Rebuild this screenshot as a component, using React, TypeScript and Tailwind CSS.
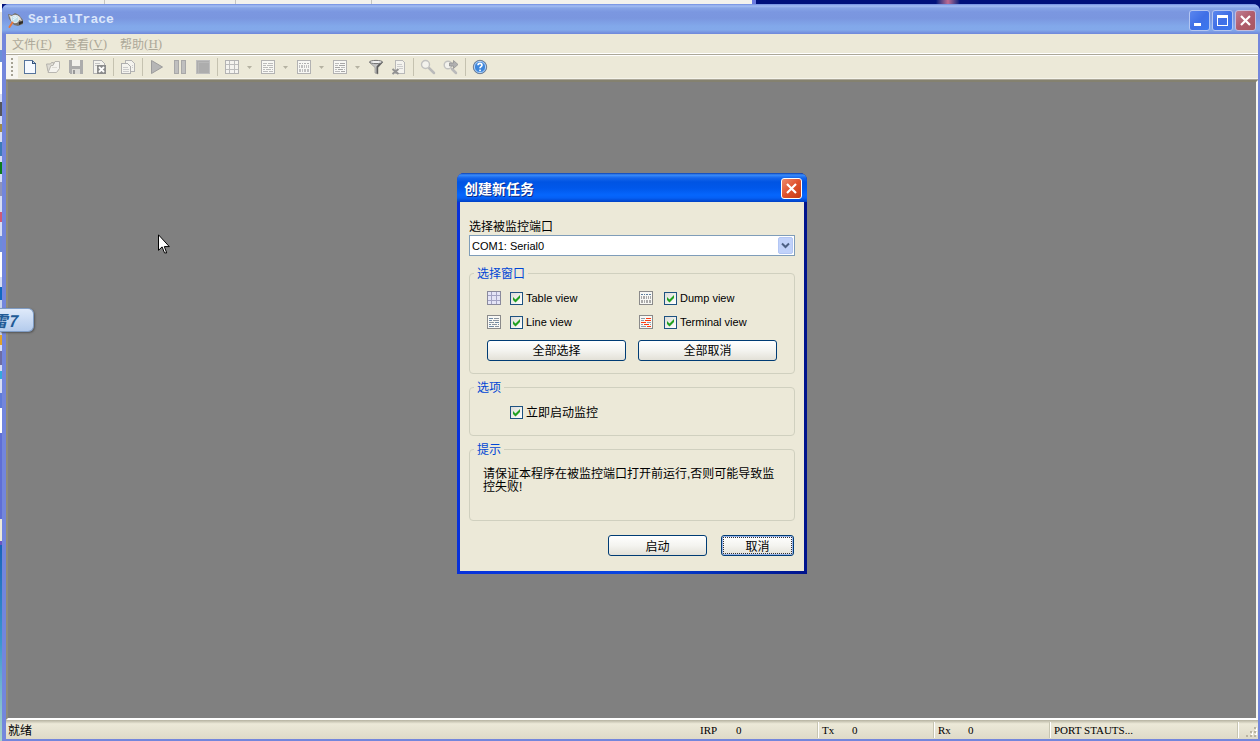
import { Fragment, useState } from "react";
import type { ReactNode } from "react";

type IconProps = { children: ReactNode; size?: string };

function Icon({ children, size = "size-4" }: IconProps) {
  return (
    <svg viewBox="0 0 16 16" className={`${size} shrink-0`} shapeRendering="crispEdges" aria-hidden="true">
      {children}
    </svg>
  );
}

function GridGlyph({ frame, line, fill }: { frame: string; line: string; fill: string }) {
  return (
    <>
      <rect x="1.5" y="1.5" width="13" height="13" fill={fill} stroke={frame} />
      <path d="M5.5 2v12M10.5 2v12M2 5.5h12M2 10.5h12" stroke={line} fill="none" />
    </>
  );
}

function LinesGlyph({ frame, line, alt }: { frame: string; line: string; alt?: string }) {
  return (
    <>
      <rect x="1.5" y="1.5" width="13" height="13" fill="#f8f8f4" stroke={frame} />
      <path d="M3 4.5h4M3 6.5h3M9 8.5h4M3 10.5h2M12 10.5h1M3 12.5h5" stroke={line} fill="none" />
      <path d="M8 4.5h5M7 6.5h6M3 8.5h5M6 10.5h5M9 12.5h4" stroke={alt ?? line} fill="none" />
    </>
  );
}

function DumpGlyph({ frame, line, dark }: { frame: string; line: string; dark: string }) {
  return (
    <>
      <rect x="1.5" y="1.5" width="13" height="13" fill="#f8f8f4" stroke={frame} />
      <path d="M3 4.5h2M6 4.5h1M8 4.5h2M11 4.5h2" stroke={dark} fill="none" />
      <path
        d="M3 6h1v3h-1zM5 6h2v3h-2zM8 6h1v3h-1zM10 6h1v3h-1zM12 6h1v3h-1zM3 10h2v3h-2zM6 10h1v3h-1zM8 10h2v3h-2zM11 10h2v3h-2z"
        fill={line}
      />
    </>
  );
}

const icons = {
  create: (
    <Icon>
      <path d="M2.5 1.5h8l3 3v10h-11z" fill="#f6faff" stroke="#56749c" />
      <path d="M10.5 2v2.500h3" fill="#c9dcf3" stroke="#34537c" />
    </Icon>
  ),
  open: (
    <Icon>
      <g shapeRendering="auto">
        <path d="M1.500 5h4l1-1.500h2v2l-3 7H3z" fill="#dedcd4" stroke="#b4b2ac" />
        <path d="M3 13.500l3-7h2l2-4h4.500v7l-3 4z" fill="#f4f3ee" stroke="#b8b6b0" />
        <path d="M7 8.500h5" stroke="#dddbd4" />
      </g>
    </Icon>
  ),
  save: (
    <Icon>
      <path d="M1 1h3v6h8V1h3v14H2l-1-1z" fill="#acacac" />
      <path d="M4 1h8v6H4z" fill="#f2f1ec" />
      <path d="M4 10h8v5H4z" fill="#dddcd7" />
      <path d="M5 11h2v4H5z" fill="#989898" />
    </Icon>
  ),
  close: (
    <Icon>
      <path d="M2.500 1.500h8l3 3v10h-11z" fill="#f4f3ee" stroke="#b2b2b2" />
      <path d="M4 4.500h5M4 6.500h2" stroke="#c4c4c4" />
      <rect x="6" y="6" width="9" height="9" fill="#8c8c8c" />
      <path d="M8 8l5 5M13 8l-5 5" stroke="#fff" strokeWidth="1.800" shapeRendering="auto" />
    </Icon>
  ),
  copy: (
    <Icon>
      <path d="M5.500 1.500h6l3 3v8h-9z" fill="#f4f3ee" stroke="#b4b4b4" />
      <path d="M1.500 4.500h6l3 3v7h-9z" fill="#f4f3ee" stroke="#aeaeae" />
      <path d="M3 8.500h5M3 10.500h6M3 12.500h6M12 6.500h1M12 8.500h1" stroke="#cbcbcb" />
    </Icon>
  ),
  play: (
    <Icon>
      <path d="M2.500 1.500v13l11-6.500z" fill="#b6b6b6" stroke="#9c9c9c" shapeRendering="auto" />
    </Icon>
  ),
  pause: (
    <Icon>
      <path d="M2.500 1.500h4v13h-4zM9.500 1.500h4v13h-4z" fill="#bfbfbf" stroke="#a8a8a8" />
    </Icon>
  ),
  stop: (
    <Icon>
      <rect x="1.500" y="1.500" width="13" height="13" fill="#adadad" stroke="#bebebe" />
      <path d="M3 14V3h11" stroke="#b8b8b8" fill="none" />
    </Icon>
  ),
  table: (
    <Icon>
      <GridGlyph frame="#b2b2b2" line="#bcbcbc" fill="#f4f3ef" />
    </Icon>
  ),
  lines: (
    <Icon>
      <LinesGlyph frame="#b2b2b2" line="#bbbbbb" />
    </Icon>
  ),
  dump: (
    <Icon>
      <DumpGlyph frame="#b2b2b2" line="#c0c0c0" dark="#b0b0b0" />
    </Icon>
  ),
  terminal: (
    <Icon>
      <LinesGlyph frame="#b2b2b2" line="#bbbbbb" alt="#a6a6a6" />
    </Icon>
  ),
  filter: (
    <Icon>
      <g shapeRendering="auto">
        <path d="M1 3l6 5.500V14l3 1V8.500L15 3z" fill="#c4c4c4" stroke="#777" strokeWidth=".5" />
        <path d="M10 8.500L15 3h-2.500L8.500 7.500V14l1.500 1z" fill="#5c5c5c" />
        <ellipse cx="8" cy="3" rx="6.500" ry="1.600" fill="#f0f0f0" stroke="#666" strokeWidth=".9" />
      </g>
    </Icon>
  ),
  clear: (
    <Icon>
      <path d="M4.500 1.500h7l2 2v11h-9z" fill="#f4f3ee" stroke="#b8b8b8" />
      <path d="M6 5.500h5M6 7.500h6M8 9.500h4" stroke="#cccccc" />
      <path d="M1.500 10l6 5M7.500 10l-6 5" stroke="#929292" strokeWidth="2" shapeRendering="auto" />
    </Icon>
  ),
  find: (
    <Icon>
      <g shapeRendering="auto">
        <path d="M9 9l5 5" stroke="#bababa" strokeWidth="2.500" strokeLinecap="round" />
        <circle cx="5.500" cy="5.500" r="4" fill="#f3f2ed" stroke="#c2c2c0" strokeWidth="1.400" />
      </g>
    </Icon>
  ),
  findNext: (
    <Icon>
      <g shapeRendering="auto">
        <path d="M9 10l4 4" stroke="#bababa" strokeWidth="2.500" strokeLinecap="round" />
        <circle cx="5" cy="6" r="3.800" fill="#f3f2ed" stroke="#c2c2c0" strokeWidth="1.400" />
        <path d="M6.500 4h4V1.500L15 5.500l-4.500 4V7h-4z" fill="#b0b0b0" stroke="#929292" strokeWidth=".8" />
      </g>
    </Icon>
  ),
  help: (
    <Icon>
      <g shapeRendering="auto">
        <circle cx="8" cy="8" r="6.700" fill="#3c86dc" stroke="#737f92" />
        <circle cx="8" cy="8" r="5.600" fill="none" stroke="#b8d4f4" />
        <path d="M6 6.300c0-2.600 4-2.600 4 0 0 1.400-2 1.500-2 3" stroke="#fff" strokeWidth="1.600" fill="none" />
        <rect x="7.200" y="10.600" width="1.700" height="1.600" fill="#fff" />
      </g>
    </Icon>
  ),
};

type Tool = { label: string; icon?: ReactNode; menu?: boolean };

const toolGroups: Tool[][] = [
  [
    { label: "新建", icon: icons.create },
    { label: "打开", icon: icons.open },
    { label: "保存", icon: icons.save },
    { label: "关闭", icon: icons.close },
  ],
  [{ label: "复制", icon: icons.copy }],
  [
    { label: "启动", icon: icons.play },
    { label: "暂停", icon: icons.pause },
    { label: "停止", icon: icons.stop },
  ],
  [
    { label: "Table view", icon: icons.table, menu: true },
    { label: "Line view", icon: icons.lines, menu: true },
    { label: "Dump view", icon: icons.dump, menu: true },
    { label: "Terminal view", icon: icons.terminal, menu: true },
    { label: "过滤", icon: icons.filter },
    { label: "清除", icon: icons.clear },
  ],
  [
    { label: "查找", icon: icons.find },
    { label: "查找下一个", icon: icons.findNext },
  ],
  [{ label: "帮助", icon: icons.help }],
];

function AppLogo() {
  return (
    <svg viewBox="0 0 16 16" className="size-4 shrink-0" aria-hidden="true">
      <path d="M0 2l4 1 3-2 4 2 4 5v4l-5 2-4-1-5-6z" fill="#77736c" />
      <path d="M1 3l3 1 2 3-3 1zM9 3l3 2 2 4-3-1z" fill="#e3dfd5" />
      <path d="M11 10l4-1v2l-4 2z" fill="#2f2d2a" />
      <circle cx="7" cy="7" r="3.800" fill="#bfe0ea" stroke="#e9eef2" />
      <path d="M5 6l3-2M5 8l4-3" stroke="#fff" strokeWidth=".8" />
      <path d="M4.500 10.500L1.500 15" stroke="#e8763a" strokeWidth="2" strokeLinecap="round" />
    </svg>
  );
}

function CaptionButton({ label, tone, children }: { label: string; tone: string; children: ReactNode }) {
  return (
    <button type="button" aria-label={label} className={`grid size-[21px] shrink-0 place-items-center rounded-[3px] border ${tone}`}>
      <svg viewBox="0 0 19 19" className="size-[19px]" shapeRendering="crispEdges" aria-hidden="true">
        {children}
      </svg>
    </button>
  );
}

const blueTone = "border-[#b4c6f2] bg-linear-to-br from-[#5b86ee] via-[#3f6fe6] to-[#3a78f0]";
const mutedRedTone = "border-[#c3bddf] bg-linear-to-br from-[#bf7d92] via-[#b05c6c] to-[#a8575f]";
const redTone = "border-white bg-linear-to-br from-[#ec8a6c] via-[#e0512c] to-[#c43a12]";

function Cross() {
  return <path d="M5 5l9 9M14 5l-9 9" stroke="#fff" strokeWidth="2.200" shapeRendering="auto" />;
}

function MenuItem({ text, hotkey }: { text: string; hotkey: string }) {
  return (
    <button type="button" className="flex items-center leading-4">
      {text}
      <span className="font-['Liberation_Serif',serif] text-[13px]">
        (<u>{hotkey}</u>)
      </span>
    </button>
  );
}

function CheckBox({ id, label }: { id: string; label: string }) {
  const [checked, setChecked] = useState(true);
  return (
    <span className="flex items-center gap-[3px]">
      <span className="relative grid size-[13px] shrink-0">
        <input
          id={id}
          type="checkbox"
          checked={checked}
          onChange={(e) => setChecked(e.target.checked)}
          className="peer size-[13px] appearance-none border border-[#1d5281] bg-linear-to-br from-[#dcdcd7] to-white"
        />
        <svg viewBox="0 0 13 13" className="pointer-events-none absolute inset-0 hidden size-[13px] peer-checked:block" aria-hidden="true">
          <path d="M3 5v3l2.500 2.500L10 6V3L5.500 7.500z" fill="#21a121" />
        </svg>
      </span>
      <label htmlFor={id} className="whitespace-nowrap">
        {label}
      </label>
    </span>
  );
}

function Group({ title, children }: { title: string; children: ReactNode }) {
  return (
    <fieldset className="min-w-0 rounded-[4px] border border-[#d0d0bf]">
      <legend className="ml-1 px-[3px] text-[12px] leading-[14px] text-[#0046d5]">{title}</legend>
      {children}
    </fieldset>
  );
}

function PushButton({ children, wide, focused }: { children: ReactNode; wide?: string; focused?: boolean }) {
  return (
    <button
      type="button"
      className={`h-[21px] rounded-[3px] border border-[#003c74] bg-linear-to-b from-white via-[#f4f4f0] to-[#e3e1d8] text-[12px] ${wide ?? "w-full"} ${focused ? "p-px shadow-[inset_0_0_0_1px_#9ab4ea]" : ""}`}
    >
      <span className={`flex items-center justify-center leading-4 ${focused ? "h-full border border-dotted border-[#333]" : ""}`}>{children}</span>
    </button>
  );
}

function NewTaskDialog() {
  return (
    <section
      role="dialog"
      aria-labelledby="task-title"
      className="flex w-[350px] flex-col rounded-t-[7px] bg-linear-to-r from-[#0831d9] via-[#0a46e0] to-[#00138c] px-[3px] pb-[3px]"
    >
      <header className="-mx-[3px] flex h-[29px] items-center justify-between rounded-t-[7px] bg-[linear-gradient(180deg,#0b3fae_0,#3a8cfb_2px,#1565ea_5px,#0054e3_9px,#0057ea_15px,#0566fd_22px,#0560f5_25px,#0140c4_29px)] pr-[5px] pl-[7px] pt-px">
        <h2 id="task-title" className="text-[14px] leading-5 font-bold text-white [text-shadow:1px_1px_#0a2a86]">
          创建新任务
        </h2>
        <CaptionButton label="关闭" tone={redTone}>
          <Cross />
        </CaptionButton>
      </header>
      <form className="flex flex-col bg-[#ece9d8] px-[9px] pt-[17px] pb-[15px]" onSubmit={(e) => e.preventDefault()}>
        <label htmlFor="port" className="mb-[2px] text-[12px] leading-[14px]">
          选择被监控端口
        </label>
        <div className="relative mb-[10px]">
          <select
            id="port"
            className="block h-[21px] w-full appearance-none border border-[#7f9db9] bg-white pl-[2px] font-['Liberation_Sans',sans-serif] text-[11px] leading-4"
          >
            <option>COM1: Serial0</option>
          </select>
          <svg viewBox="0 0 15 17" className="pointer-events-none absolute top-[2px] right-[2px] h-[17px] w-[15px]" aria-hidden="true">
            <rect x=".5" y=".5" width="14" height="16" rx="1.500" fill="#c1d2fa" stroke="#b3c6f4" />
            <path d="M4 6.500l3.500 3.500L11 6.500" stroke="#4d6185" strokeWidth="2" fill="none" />
          </svg>
        </div>

        <div className="flex flex-col gap-[6px]">
          <Group title="选择窗口">
            <div className="grid grid-cols-2 gap-x-3 px-[17px] pt-[6px] pb-3 font-['Liberation_Sans','Noto_Sans_CJK_SC',sans-serif] text-[11px]">
              <div className="flex h-6 items-center gap-2">
                <Icon size="size-4 -ml-px">
                  <GridGlyph frame="#8a8a9c" line="#a3a3c4" fill="#e4e4f6" />
                </Icon>
                <CheckBox id="table" label="Table view" />
              </div>
              <div className="flex h-6 items-center gap-[10px]">
                <Icon>
                  <DumpGlyph frame="#8a8a8a" line="#a9a9a9" dark="#5f7f9c" />
                </Icon>
                <CheckBox id="dump" label="Dump view" />
              </div>
              <div className="flex h-6 items-center gap-2">
                <Icon size="size-4 -ml-px">
                  <LinesGlyph frame="#8a8a8a" line="#6f8aa5" alt="#8b95a0" />
                </Icon>
                <CheckBox id="line" label="Line view" />
              </div>
              <div className="flex h-6 items-center gap-[10px]">
                <Icon>
                  <LinesGlyph frame="#8a8a8a" line="#8f9cab" alt="#ff3a10" />
                </Icon>
                <CheckBox id="terminal" label="Terminal view" />
              </div>
              <div className="mt-[6px] flex">
                <PushButton>全部选择</PushButton>
              </div>
              <div className="mt-[6px] flex">
                <PushButton>全部取消</PushButton>
              </div>
            </div>
          </Group>

          <Group title="选项">
            <div className="flex h-[41px] items-start pt-[6px] pl-10 text-[12px]">
              <div className="flex h-6 items-center">
                <CheckBox id="autostart" label="立即启动监控" />
              </div>
            </div>
          </Group>

          <Group title="提示">
            <p className="px-[13px] pt-3 pb-[26px] font-['Liberation_Sans','Noto_Sans_CJK_SC',sans-serif] text-[12px] leading-[13px]">
              请保证本程序在被监控端口打开前运行,否则可能导致监控失败!
            </p>
          </Group>
        </div>

        <div className="mt-[14px] flex justify-end gap-[14px] pr-px">
          <PushButton wide="w-[99px]">启动</PushButton>
          <PushButton wide="w-[73px]" focused>
            取消
          </PushButton>
        </div>
      </form>
    </section>
  );
}

const stripSegments = [
  "h-[8px] bg-white",
  "h-[38px] bg-[#eceae4]",
  "h-[12px] bg-[#6b8fd8]",
  "h-[32px] bg-white",
  "h-[8px] bg-[#d6dcf4]",
  "h-[14px] bg-[#55565e]",
  "h-[8px] bg-[#d6dcf4]",
  "h-[8px] bg-[#a08a4a]",
  "h-[10px] bg-[#d6dcf4]",
  "h-[14px] bg-[#3d7ab8]",
  "h-[6px] bg-[#d6dcf4]",
  "h-[12px] bg-[#0c7d1c]",
  "h-[8px] bg-[#d6dcf4]",
  "h-[14px] bg-[#8e93bb]",
  "h-[16px] bg-[#d6dcf4]",
  "h-[10px] bg-[#cf5a76]",
  "h-[14px] bg-[#d6dcf4]",
  "h-[16px] bg-[#6c8bdb]",
  "h-[25px] bg-white",
  "h-[10px] bg-[#d6dcf4]",
  "h-[13px] bg-[#1268c0]",
  "h-[35px] bg-[#c7d4ef]",
  "h-[10px] bg-[#e0a22c]",
  "h-[6px] bg-[#d6dcf4]",
  "h-[14px] bg-[#6d6da4]",
  "h-[6px] bg-[#d6dcf4]",
  "h-[8px] bg-[#35a9dc]",
  "h-[14px] bg-[#d6dcf4]",
  "h-[15px] bg-[#5f7bd8]",
  "h-[25px] bg-white",
  "h-[86px] bg-[#5f6fd4]",
  "h-[22px] bg-[#ece9d8]",
  "h-[4px] bg-[#6b58c4]",
];

function DesktopStrip() {
  return (
    <div className="flex w-[2px] shrink-0 flex-col overflow-hidden" aria-hidden="true">
      {stripSegments.map((cls, i) => (
        <span key={i} className={`shrink-0 ${cls}`} />
      ))}
      <span className="flex-1 bg-linear-to-b from-[#1a63b8] via-[#3c97cf] to-[#a8d4c8]" />
    </div>
  );
}

function StatusCell({ name, value, width }: { name: string; value?: string; width: string }) {
  return (
    <div className={`flex items-center border-r border-[#c7c5b2] pl-[4px] shadow-[1px_0_#fff] ${width}`}>
      <span className={value ? "w-[30px]" : ""}>{name}</span>
      {value && <span>{value}</span>}
    </div>
  );
}

export default function App() {
  return (
    <div className="relative flex h-screen min-h-[640px] flex-col overflow-hidden bg-[#00107b] font-['Noto_Sans_CJK_SC',sans-serif] text-[12px] text-black">
      <div className="flex h-1 shrink-0" aria-hidden="true">
        <div className="flex w-3/5 border-r-4 border-[#6b7be0] bg-[#f2f1ec]">
          <span className="w-[105px] border-r border-[#c5c5c0]" />
          <span className="w-[131px] border-r border-[#c5c5c0]" />
          <span className="w-[136px] border-r border-[#c5c5c0]" />
        </div>
        <div className="flex flex-1 justify-center">
          <span className="-ml-[120px] w-6 bg-linear-to-r from-[#00107b] via-[#c06a90] to-[#00107b]" />
        </div>
      </div>

      <div className="flex min-h-0 flex-1">
        <DesktopStrip />
        <main className="flex min-w-0 flex-1 flex-col rounded-t-[7px] bg-[#7386dc] pr-[2px] pb-[2px] pl-1">
          <header className="-mr-[2px] -ml-1 flex h-[30px] shrink-0 items-center rounded-t-[7px] bg-[linear-gradient(180deg,#6f8ce0_0,#a3bdf3_2px,#86a4e6_4px,#7b97e0_8px,#7a96df_14px,#82a8ea_22px,#83a9ea_26px,#6f87da_30px)] pt-[2px] pr-1 pl-[6px]">
            <AppLogo />
            <h1 className="flex-1 pl-1 font-['Liberation_Mono',monospace] text-[13px] leading-4 font-bold text-[#dbe6fb]">SerialTrace</h1>
            <div className="flex gap-[2px]">
              <CaptionButton label="最小化" tone={blueTone}>
                <rect x="4" y="12" width="7" height="3" fill="#fff" />
              </CaptionButton>
              <CaptionButton label="最大化" tone={blueTone}>
                <path d="M4 4h11v11H4zM5 7v7h9V7z" fill="#fff" fillRule="evenodd" />
              </CaptionButton>
              <CaptionButton label="关闭" tone={mutedRedTone}>
                <Cross />
              </CaptionButton>
            </div>
          </header>

          <nav className="flex h-5 shrink-0 items-center gap-[13px] border-b border-white bg-[#ece9d8] pl-[6px] text-[#aca899]">
            <MenuItem text="文件" hotkey="F" />
            <MenuItem text="查看" hotkey="V" />
            <MenuItem text="帮助" hotkey="H" />
          </nav>

          <div role="toolbar" className="flex h-[26px] shrink-0 border-y border-[#aca899] bg-[#ece9d8] shadow-[inset_0_1px_#fff,inset_0_-1px_#f5f4ea]">
            <span className="flex w-3 flex-col items-center justify-center gap-[2px] bg-[#f6f5f0]" aria-hidden="true">
              {[0, 1, 2, 3, 4].map((n) => (
                <i key={n} className="size-[2px] bg-[#a5a294]" />
              ))}
            </span>
            {toolGroups.map((group, g) => (
              <Fragment key={g}>
                {g > 0 && (
                  <span className="flex w-[6px] justify-center py-[3px]" aria-hidden="true">
                    <i className="w-px bg-[#c5c2b0]" />
                  </span>
                )}
                {group.map((tool) => (
                  <Fragment key={tool.label}>
                    <button type="button" aria-label={tool.label} className="grid w-[23px] place-items-center">
                      {tool.icon}
                    </button>
                    {tool.menu && (
                      <button type="button" aria-label={`${tool.label} 选项`} className="grid w-[13px] place-items-center">
                        <svg viewBox="0 0 5 3" className="h-[3px] w-[5px]" aria-hidden="true">
                          <path d="M0 0h5L2.500 3z" fill="#b5b2a2" />
                        </svg>
                      </button>
                    )}
                  </Fragment>
                ))}
              </Fragment>
            ))}
          </div>

          <div className="flex min-h-0 flex-1 items-start justify-center border-2 border-t-[#84816f] border-r-[#f8f7f0] border-b-white border-l-[#8f8c7c] bg-[#808080] pt-[91px]">
            <NewTaskDialog />
          </div>

          <footer className="flex h-[19px] shrink-0 bg-linear-to-b from-[#b5b2a0] via-[#ece9d8] via-20% to-[#dedac8] pt-[2px] pb-px">
            <span className="flex flex-1 items-center pl-[2px] leading-4">就绪</span>
            <div className="flex font-['Liberation_Serif',serif] text-[11px] leading-4">
              <StatusCell name="IRP" value="0" width="w-[122px] [&>span:first-child]:w-[36px]" />
              <StatusCell name="Tx" value="0" width="w-[116px]" />
              <StatusCell name="Rx" value="0" width="w-[116px]" />
              <StatusCell name="PORT STAUTS..." width="w-[188px]" />
            </div>
            <svg viewBox="0 0 20 16" className="h-4 w-5" shapeRendering="crispEdges" aria-hidden="true">
              <path d="M16 5h2v2h-2zM12 9h2v2h-2zM16 9h2v2h-2zM8 13h2v2H8zM12 13h2v2h-2zM16 13h2v2h-2z" fill="#b8b4a2" />
              <path d="M18 6v2h-1M14 10v2h-1M18 10v2h-1" stroke="#fff" fill="none" />
            </svg>
          </footer>
        </main>
      </div>

      <div className="absolute top-[308px] left-0 flex h-6 w-[34px] items-center justify-end overflow-hidden rounded-r-[6px] border border-l-0 border-[#7f9cc4] bg-linear-to-b from-[#dfeafa] to-[#b4cbec] pr-4 text-[16px] leading-5 font-bold whitespace-nowrap text-[#215a96] italic shadow-[1px_1px_2px_#555]">
        雷7
      </div>

      <svg viewBox="0 0 12 20" className="pointer-events-none absolute top-[234px] left-[158px] h-5 w-3" aria-hidden="true">
        <path d="M.5 .8v15.500l3.600-3.400 2.400 6h2.200l-2.400-6.300h5z" fill="#fff" stroke="#000" />
      </svg>
    </div>
  );
}
